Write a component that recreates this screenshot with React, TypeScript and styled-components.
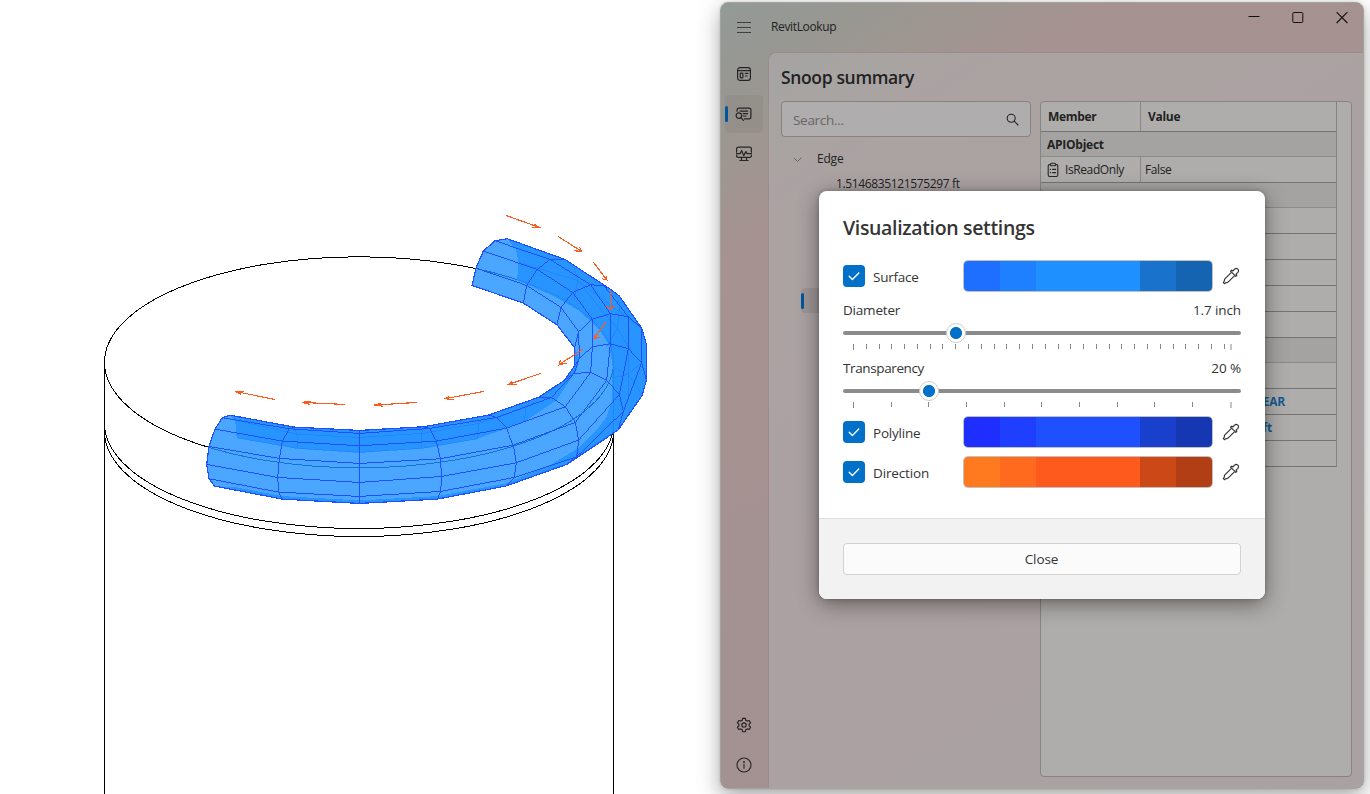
import React from "react";
import styled, { createGlobalStyle } from "styled-components";

const Global = createGlobalStyle`
  * { box-sizing: border-box; }
  body { margin: 0; background: #fff; overflow: hidden; }
  #root { font-family: "Open Sans", "Noto Sans", sans-serif; }
`;

const Desktop = styled.main`
  position: relative;
  width: 1370px;
  height: 794px;
  overflow: hidden;
  background: #fff;
`;

const SceneSvg = styled.svg`
  display: block;
`;

const Text = styled.span<{ $size?: number; $weight?: number; $color?: string; $ls?: number }>`
  font-size: ${(p) => p.$size ?? 12}px;
  font-weight: ${(p) => p.$weight ?? 400};
  color: ${(p) => p.$color ?? "#222"};
  letter-spacing: ${(p) => p.$ls ?? 0}px;
  white-space: pre;
  line-height: 1.4;
`;

/* ---------- 3D view ---------- */

type Pt = [number, number];

const rings: Pt[][] = [
  [[952, 116], [915, 122], [880, 153], [858, 204], [846, 256]],
  [[1125, 178], [1080, 178], [1042, 208], [1010, 256], [1000, 309]],
  [[1262, 268], [1242, 257], [1202, 254], [1148, 277], [1113, 322], [1101, 374]],
  [[1355, 384], [1315, 350], [1261, 341], [1207, 357], [1166, 395], [1154, 443]],
  [[1369, 540], [1355, 487], [1315, 446], [1261, 431], [1207, 440], [1168, 475], [1154, 497]],
  [[1284, 690], [1300, 634], [1288, 583], [1250, 541], [1202, 517], [1152, 520], [1123, 541]],
  [[1130, 793], [1160, 770], [1166, 720], [1156, 667], [1126, 620], [1084, 592], [1045, 592]],
  [[947, 858], [973, 832], [979, 788], [970, 735], [950, 684], [920, 652], [895, 645]],
  [[742, 897], [752, 874], [755, 829], [751, 776], [739, 723], [719, 685], [700, 680]],
  [[508, 910], [508, 889], [508, 847], [508, 790], [508, 737], [508, 700], [508, 691]],
  [[277, 897], [266, 876], [263, 832], [268, 775], [277, 723], [298, 686], [313, 681]],
  [[74, 858], [57, 836], [50, 793], [57, 739], [75, 687], [97, 653], [119, 645]],
];

const longitudinals: Pt[][] = [
  [[915, 122], [1080, 178], [1202, 254], [1261, 341], [1261, 431]],
  [[880, 153], [1042, 208], [1148, 277], [1207, 357], [1207, 440]],
  [[858, 204], [1010, 256], [1113, 322], [1166, 395], [1168, 475]],
  [[1242, 257], [1315, 350], [1315, 446]],
  [[1355, 384], [1355, 487]],
  ...[1, 2, 3, 4, 5].map((k) => rings.slice(4).map((r) => r[k])),
];

const outline: Pt[] = [
  [952, 116], [1125, 178], [1262, 268], [1288, 288], [1355, 384], [1369, 432], [1369, 540],
  [1357, 585], [1284, 690], [1130, 793], [947, 858], [742, 897], [508, 910], [277, 897], [74, 858],
  [57, 836], [50, 793], [57, 739], [75, 687], [97, 653], [119, 645], [313, 681], [508, 691],
  [700, 680], [895, 645], [1045, 592], [1123, 541], [1154, 497], [1154, 443], [1101, 374],
  [1000, 309], [846, 256], [858, 204], [880, 153], [915, 122],
];

const backFaces: Pt[][] = [
  [
    [952, 116], [1125, 178], [1262, 268], [1288, 288], [1355, 384], [1369, 432], [1369, 540],
    [1357, 585], [1284, 690], [1130, 793], [947, 858], [742, 897], [508, 910], [277, 897], [74, 858],
    [140, 862], [277, 888], [508, 901], [742, 888], [947, 850], [1080, 795], [1168, 742],
    [1220, 690], [1250, 650], [1266, 600], [1268, 500], [1258, 435], [1228, 390], [1172, 335],
    [1095, 290], [981, 240], [986, 187], [978, 150],
  ],
  [
    [119, 645], [313, 681], [508, 691], [700, 680], [895, 645], [1045, 592], [1123, 541],
    [1154, 497], [1154, 443], [1168, 475], [1160, 510], [1100, 600], [1000, 667], [862, 716], [694, 745],
    [508, 757], [323, 745], [140, 713], [136, 665],
  ],
];

const hiddenEdges: Pt[][] = [
  [[136, 660], [320, 702], [508, 712], [697, 700], [866, 670], [1008, 622], [1100, 560]],
  [[313, 681], [321, 705], [323, 745]],
  [[700, 680], [694, 705], [694, 745]],
  [[895, 645], [866, 670], [862, 716]],
  [[1020, 600], [1008, 622], [1003, 665]],
  [[140, 713], [323, 745], [508, 757], [694, 745], [862, 716]],
  [[986, 187], [1160, 240], [1282, 330], [1355, 384]],
  [[1125, 178], [1154, 205], [1163, 240], [1152, 300]],
  [[1262, 268], [1290, 310], [1282, 385], [1250, 440]],
  [[1163, 240], [1228, 322], [1282, 385], [1320, 450]],
  [[1355, 487], [1315, 523], [1262, 534]],
  [[1315, 446], [1315, 523], [1315, 600]],
  [[1268, 500], [1315, 523], [1357, 585]],
];

const arrows: Pt[][] = [
  [[948, 46], [1048, 82], [1025, 82], [1033, 73]],
  [[1104, 109], [1175, 154], [1153, 152], [1169, 142]],
  [[1210, 186], [1250, 239], [1236, 236], [1250, 227]],
  [[1261, 272], [1261, 328], [1249, 318], [1274, 318]],
  [[1249, 364], [1212, 416], [1214, 401], [1230, 411]],
  [[1178, 448], [1108, 493], [1111, 481], [1132, 490]],
  [[1052, 520], [955, 553], [966, 544], [980, 553]],
  [[881, 574], [764, 596], [778, 590], [792, 598]],
  [[680, 607], [553, 615], [574, 609], [578, 618]],
  [[464, 613], [337, 607], [362, 603], [360, 613]],
  [[254, 598], [136, 574], [162, 575], [154, 583]],
];

const pts = (p: Pt[]) => p.map((q) => q.join(",")).join(" ");

function Scene() {
  return (
    <SceneSvg width="1370" height="794" viewBox="0 0 1370 794" fill="none" shapeRendering="crispEdges">
      <g stroke="#000" strokeWidth="1">
        <ellipse cx="359" cy="362.3" rx="254.5" ry="105.5" />
        <path d="M104.5 362V794M613.5 362V794" />
        <path d="M104.5 423.5A254.5 105 0 0 0 613.5 423.5" />
        <path d="M104.5 431.5A254.5 105 0 0 0 613.5 431.5" />
      </g>
      <g transform="translate(190 200.1) scale(0.33333)" strokeWidth="3">
        {backFaces.map((f, i) => (
          <polygon key={i} points={pts(f)} fill="#1e90ff" fillOpacity="0.8" />
        ))}
        <polygon points={pts(outline)} fill="#1e90ff" fillOpacity="0.8" />
        <g stroke="#1e80fa" strokeOpacity="0.6">
          {hiddenEdges.map((l, i) => (
            <polyline key={i} points={pts(l)} />
          ))}
        </g>
        <g stroke="#1e50ff">
          {rings.map((l, i) => (
            <polyline key={i} points={pts(l)} />
          ))}
          {longitudinals.map((l, i) => (
            <polyline key={i} points={pts(l)} />
          ))}
          <polygon points={pts(outline)} strokeWidth="3.6" />
        </g>
        <g stroke="#ff5a1e" strokeWidth="3.4">
          {arrows.map(([a, b, c, d], i) => (
            <polyline key={i} points={pts([a, b, c, b, d])} />
          ))}
        </g>
      </g>
    </SceneSvg>
  );
}

/* ---------- Application window ---------- */

const AppWindow = styled.section`
  position: absolute;
  left: 720px;
  top: 2px;
  width: 644px;
  height: 787px;
  display: flex;
  flex-direction: column;
  border: 1px solid #a3a3a2;
  border-radius: 8px;
  background: linear-gradient(147deg, #939a96 0%, #989792 8%, #9f9690 14%, #a59291 21%, #a49191 60%, #a39290 100%);
  box-shadow: 0 8px 22px rgba(0, 0, 0, 0.34), 0 0 3px rgba(0, 0, 0, 0.16);
`;

const TitleBar = styled.header`
  height: 49px;
  flex: none;
  display: flex;
  align-items: flex-start;
  padding-left: 15px;
`;

const TitleText = styled.div`
  flex: 1;
  display: flex;
  padding: 16px 0 0 19px;
`;

const MenuIcon = styled.svg`
  margin-top: 16px;
`;

const Captions = styled.div`
  display: flex;
  gap: 32px;
  padding: 8px 15px 0 0;
`;

const Shell = styled.div`
  flex: 1;
  display: flex;
  min-height: 0;
`;

const Nav = styled.nav`
  width: 47px;
  display: flex;
  flex-direction: column;
  padding: 3px 0 4px 4px;
  gap: 2px;
`;

const NavItem = styled.div<{ $active?: boolean }>`
  width: 38px;
  height: 38px;
  border-radius: 4px;
  display: flex;
  align-items: center;
  background: ${(p) => (p.$active ? "rgba(120,112,108,0.17)" : "transparent")};
  svg { margin-left: ${(p) => (p.$active ? 7 : 11)}px; }
`;

const ActiveMark = styled.i<{ $h: number }>`
  width: 3px;
  height: ${(p) => p.$h}px;
  border-radius: 2px;
  background: #00569c;
  flex: none;
`;

const Spacer = styled.div`
  flex: 1;
`;

const Content = styled.div`
  flex: 1;
  display: flex;
  flex-direction: column;
  border: solid #9c8b8a;
  border-width: 1px 0 0 1px;
  border-radius: 8px 0 7px 0;
  background: rgba(178, 178, 180, 0.5);
  padding: 12px 11px 11px 12px;
`;

const PageTitle = styled.div`
  height: 36px;
`;

const Columns = styled.div`
  flex: 1;
  display: flex;
  gap: 9px;
  min-height: 0;
`;

const TreePane = styled.div`
  width: 250px;
`;

const SearchBox = styled.div`
  height: 36px;
  border: 1px solid #878383;
  border-radius: 4px;
  background: #afadad;
  display: flex;
  align-items: center;
  justify-content: space-between;
  padding: 0 11px;
  ${Text} { padding-top: 2px; }
`;

const TreeRow = styled.div<{ $indent: number }>`
  height: 25px;
  display: flex;
  align-items: center;
  gap: 15px;
  padding-left: ${(p) => p.$indent}px;
`;

const Tree = styled.div`
  padding-top: 10px;
`;

const SelectedRow = styled.div`
  margin: 91px 0 0 20px;
  height: 25px;
  display: flex;
  align-items: center;
  border-radius: 4px;
  background: rgba(120, 110, 110, 0.25);
`;

const Table = styled.div`
  flex: 1;
  border: 1px solid #888483;
  border-radius: 4px;
  background: #afadab;
  overflow: hidden;
`;

const Grid = styled.div`
  width: 296px;
  border-right: 1px solid #848282;
  ${Text} { padding-top: 2px; }
`;

const Row = styled.div<{ $h: number; $group?: boolean; $light?: boolean }>`
  height: ${(p) => p.$h}px;
  display: flex;
  border-bottom: 1px solid ${(p) => (p.$light ? "#8d8b8a" : "#757373")};
  background: ${(p) => (p.$group ? "#a5a3a2" : "transparent")};
`;

const Cell = styled.div<{ $w?: number; $pad: number }>`
  ${(p) => (p.$w ? `width: ${p.$w}px; border-right: 1px solid #8b8988;` : "flex: 1;")}
  padding-left: ${(p) => p.$pad}px;
  display: flex;
  align-items: center;
  gap: 6px;
`;

const LinkCell = styled.div<{ $right: number }>`
  flex: 1;
  display: flex;
  justify-content: flex-end;
  align-items: center;
  padding-right: ${(p) => p.$right}px;
`;

const line = { fill: "none", stroke: "#262424", strokeLinecap: "round", strokeLinejoin: "round" } as const;

const BoardIcon = () => (
  <svg width="16" height="16" viewBox="0 0 16 16" {...line} strokeWidth="1.2">
    <rect x="1.6" y="1.6" width="12.8" height="12.8" rx="2.4" />
    <path d="M1.8 4.6H14.2M9.3 7.4H12M9.3 10H11" />
    <rect x="4.2" y="7.2" width="2.7" height="4.6" rx=".5" />
  </svg>
);

const SnoopIcon = () => (
  <svg width="17" height="16" viewBox="0 0 17 16" {...line} strokeWidth="1.2">
    <path d="M2.1 5.2V4Q2.1 2.1 4 2.1H14Q15.9 2.1 15.9 4V11Q15.9 12.9 14 12.9H9.4M5.2 5.1H12.6M8.2 7.6H12.6M8.4 10H11" />
    <circle cx="3.9" cy="9.6" r="2.8" />
    <path d="M6 11.7L8.4 14.3" />
  </svg>
);

const MonitorIcon = () => (
  <svg width="16" height="16" viewBox="0.5 0 16 16" {...line} strokeWidth="1.2">
    <path d="M1.1 6.2V3Q1.1 1.1 3 1.1H14Q15.9 1.1 15.9 3V6.2M1.1 9V10Q1.1 11.4 3 11.4H14Q15.9 11.4 15.9 10V9" />
    <path d="M1 7.6H4.6L6.2 4.6L8.2 9.6L10.4 5.6L11.6 7.6H16M6 11.6V14.4M11 11.6V14.4M4.4 14.5H12.6" />
  </svg>
);

const GearIcon = () => (
  <svg width="16" height="16" viewBox="0 0 16 16" {...line} strokeWidth="1.15">
    <path d="M6.6 1.3H9.4L9.8 3.3L11.2 4.1L13.2 3.5L14.6 5.9L13.1 7.2V8.8L14.6 10.1L13.2 12.5L11.2 11.9L9.8 12.7L9.4 14.7H6.6L6.2 12.7L4.8 11.9L2.8 12.5L1.4 10.1L2.9 8.8V7.2L1.4 5.9L2.8 3.5L4.8 4.1L6.2 3.3Z" />
    <circle cx="8" cy="8" r="2.2" />
  </svg>
);

const InfoIcon = () => (
  <svg width="16" height="16" viewBox="0 0 16 16" {...line} strokeWidth="1.1">
    <circle cx="8" cy="8" r="7" />
    <path d="M8 7.4V11.2" />
    <circle cx="8" cy="5" r=".4" fill="#262424" />
  </svg>
);

/* ---------- Dialog ---------- */

const Dialog = styled.section`
  position: absolute;
  left: 819px;
  top: 191px;
  width: 446px;
  height: 408px;
  display: flex;
  flex-direction: column;
  border-radius: 8px;
  overflow: hidden;
  background: #fff;
`;

const DialogShadow = styled.div`
  position: absolute;
  left: 819px;
  top: 191px;
  width: 446px;
  height: 408px;
  border-radius: 8px;
  box-shadow: 0 5px 22px rgba(0, 0, 0, 0.42), 0 0 4px rgba(0, 0, 0, 0.25);
`;

const DialogBody = styled.div`
  flex: 1;
  padding: 24px 24px 0;
`;

const DialogTitle = styled.h1`
  margin: 0 0 19px;
  height: 26px;
  display: flex;
  align-items: center;
`;

const OptionRow = styled.div<{ $top?: number }>`
  height: 32px;
  margin-top: ${(p) => p.$top ?? 0}px;
  display: flex;
  align-items: center;
`;

const Check = styled.div`
  width: 22px;
  height: 22px;
  border-radius: 4px;
  background: #0070c9;
  display: grid;
  place-items: center;
`;

const OptionLabel = styled.div`
  width: 98px;
  display: flex;
  padding: 2px 0 0 8px;
`;

const Palette = styled.div`
  width: 250px;
  height: 32px;
  display: flex;
  border: 1px solid #c2c0bc;
  border-radius: 5px;
  overflow: hidden;
`;

const Shade = styled.div<{ $c: string; $w: number }>`
  width: ${(p) => p.$w}px;
  background: ${(p) => p.$c};
`;

const PickerIcon = styled.svg`
  margin-left: 9px;
`;

const Setting = styled.div`
  height: 58px;
  padding-top: 8px;
`;

const SettingHead = styled.div`
  height: 20px;
  display: flex;
  align-items: center;
  justify-content: space-between;
`;

const Slider = styled.div`
  height: 20px;
  margin-top: 3px;
  display: flex;
  align-items: center;
`;

const Track = styled.div<{ $w?: number }>`
  height: 4px;
  ${(p) => (p.$w ? `width: ${p.$w}px;` : "flex: 1;")}
  background: #8b8b8b;
  border-radius: 2px;
`;

const Thumb = styled.div`
  width: 20px;
  height: 20px;
  margin: 0 -2px;
  border: 1px solid #cfcfcf;
  border-radius: 50%;
  background: radial-gradient(circle, #0070c9 5.6px, #fff 6.4px);
  z-index: 1;
`;

const Ticks = styled.div`
  display: flex;
  align-items: flex-start;
  margin: 1px 9px 0 10px;
  height: 6px;
`;

const TickRun = styled.div<{ $w: number }>`
  width: ${(p) => p.$w}px;
  display: flex;
  justify-content: space-between;
`;

const Tick = styled.i<{ $long?: boolean }>`
  width: 1px;
  height: ${(p) => (p.$long ? 6 : 5)}px;
  background: #868686;
`;

const EndTick = styled.i`
  width: 2px;
  height: 6px;
  margin-left: auto;
  background: #c4c4c4;
`;

const DialogFooter = styled.footer`
  height: 81px;
  border-top: 1px solid #e0e0e0;
  background: #f2f2f2;
  padding: 24px;
`;

const CloseButton = styled.button`
  width: 100%;
  height: 32px;
  padding: 0 1px 0 0;
  border: 1px solid #d1d1d1;
  border-radius: 4px;
  background: #fbfbfb;
  font-family: inherit;
`;

const dark = "#343434";

function Option({ label, colors, top, ls }: { label: string; colors: string[]; top?: number; ls?: number }) {
  const widths = [36, 36, 104, 36, 36];
  return (
    <OptionRow $top={top}>
      <Check>
        <svg width="14" height="12" viewBox="0 0 14 12" fill="none" stroke="#fff" strokeWidth="1.4" strokeLinecap="round" strokeLinejoin="round">
          <path d="M2.2 6.2L5.4 9.4L11.8 3" />
        </svg>
      </Check>
      <OptionLabel>
        <Text $size={13.5} $color={dark} $ls={ls}>{label}</Text>
      </OptionLabel>
      <Palette>
        {colors.map((c, i) => (
          <Shade key={c} $c={c} $w={widths[i]} />
        ))}
      </Palette>
      <PickerIcon width="18" height="18" viewBox="0 0 18 18" fill="none" stroke="#333" strokeWidth="1.15" strokeLinejoin="round" strokeLinecap="round">
        <path d="M9.2 5.6L3.1 11.7Q2.5 12.3 2.4 13.1L2.2 14.3L1.3 15.6L2.4 16.7L3.7 15.8L4.9 15.6Q5.7 15.5 6.3 14.9L12.4 8.8" />
        <path d="M8.6 4.2L9.7 3.1L10.8 4L12.6 2.1Q14 .9 15.6 1.9Q17.3 3.5 15.9 5.4L14 7.2L14.9 8.3L13.8 9.4Z" />
      </PickerIcon>
    </OptionRow>
  );
}

function SliderSetting(p: { label: string; value: string; pos: number; count: number; run: number; ls?: number }) {
  return (
    <Setting>
      <SettingHead>
        <Text $size={13.5} $color={dark} $ls={p.ls}>{p.label}</Text>
        <Text $size={13.5} $color={dark} $ls={-0.1}>{p.value}</Text>
      </SettingHead>
      <Slider>
        <Track $w={p.pos} />
        <Thumb />
        <Track />
      </Slider>
      <Ticks>
        <TickRun $w={p.run}>
          {Array.from({ length: p.count }, (_, i) => (
            <Tick key={i} $long={i === 0} />
          ))}
        </TickRun>
        <EndTick />
      </Ticks>
    </Setting>
  );
}

export default function App() {
  return (
    <Desktop>
      <Global />
      <Scene />
      <AppWindow>
        <TitleBar>
          <MenuIcon width="16" height="16" viewBox="0 0 16 16" stroke="#3f3e3c" strokeWidth="1">
            <path d="M1 3.5H15M1 8.5H15M1 13.5H15" />
          </MenuIcon>
          <TitleText>
            <Text $ls={-0.35}>RevitLookup</Text>
          </TitleText>
          <Captions>
            <svg width="12" height="14" viewBox="0 0 12 14" stroke="#111" fill="none">
              <path d="M.5 5.5H11.5" />
            </svg>
            <svg width="12" height="14" viewBox="0 0 12 14" stroke="#111" fill="none">
              <rect x=".8" y="1.5" width="10" height="10" rx="1" />
            </svg>
            <svg width="12" height="14" viewBox="0 0 12 14" stroke="#111" fill="none" strokeWidth="1.1">
              <path d="M.6 1.2L11.4 12M11.4 1.2L.6 12" />
            </svg>
          </Captions>
        </TitleBar>
        <Shell>
          <Nav>
            <NavItem><BoardIcon /></NavItem>
            <NavItem $active><ActiveMark $h={16} /><SnoopIcon /></NavItem>
            <NavItem><MonitorIcon /></NavItem>
            <Spacer />
            <NavItem><GearIcon /></NavItem>
            <NavItem><InfoIcon /></NavItem>
          </Nav>
          <Content>
            <PageTitle>
              <Text $size={17.5} $weight={600} $ls={-0.35}>Snoop summary</Text>
            </PageTitle>
            <Columns>
              <TreePane>
                <SearchBox>
                  <Text $size={13.5} $color="#686666" $ls={-0.3}>Search...</Text>
                  <svg width="13" height="13" viewBox="0 0 13 13" {...line} strokeWidth="1.1">
                    <circle cx="5.2" cy="5.2" r="4" />
                    <path d="M8.2 8.2L12 12" />
                  </svg>
                </SearchBox>
                <Tree>
                  <TreeRow $indent={12}>
                    <svg width="9" height="6" viewBox="0 0 9 6" fill="none" stroke="#6b6767" strokeLinecap="round">
                      <path d="M1 1L4.5 4.5L8 1" />
                    </svg>
                    <Text $ls={-0.2}>Edge</Text>
                  </TreeRow>
                  <TreeRow $indent={55}>
                    <Text $ls={-0.36}>1.5146835121575297 ft</Text>
                  </TreeRow>
                </Tree>
                <SelectedRow><ActiveMark $h={16} /></SelectedRow>
              </TreePane>
              <Table>
                <Grid>
                  <Row $h={30}>
                    <Cell $w={100} $pad={7}><Text $weight={700} $ls={-0.3}>Member</Text></Cell>
                    <Cell $pad={7}><Text $weight={700} $ls={-0.3}>Value</Text></Cell>
                  </Row>
                  <Row $h={25} $group $light>
                    <Cell $pad={6}><Text $weight={700} $ls={-0.25}>APIObject</Text></Cell>
                  </Row>
                  <Row $h={26}>
                    <Cell $w={100} $pad={6}>
                      <svg width="12" height="16" viewBox="0 0 12 16" {...line} strokeWidth="1.1">
                        <path d="M3.5 2.6H2.6Q1.2 2.6 1.2 4V13Q1.2 14.5 2.6 14.5H9.4Q10.8 14.5 10.8 13V4Q10.8 2.6 9.4 2.6H8.5" />
                        <rect x="3.5" y="1.3" width="5" height="2.5" rx="1" />
                        <path d="M3.3 7.4H3.6M5.6 7.4H8.6M3.3 10.6H3.6M5.6 10.6H8.6" />
                      </svg>
                      <Text $ls={-0.4}>IsReadOnly</Text>
                    </Cell>
                    <Cell $pad={4}><Text $ls={-0.4}>False</Text></Cell>
                  </Row>
                  <Row $h={25} $group $light />
                  <Row $h={26} />
                  <Row $h={26} />
                  <Row $h={26} />
                  <Row $h={26} />
                  <Row $h={26} />
                  <Row $h={25} $group $light />
                  <Row $h={26} />
                  <Row $h={26}>
                    <LinkCell $right={51}><Text $weight={700} $color="#145a92" $ls={-0.2}>EAR</Text></LinkCell>
                  </Row>
                  <Row $h={26}>
                    <LinkCell $right={64}><Text $weight={700} $color="#145a92" $ls={-0.2}>ft</Text></LinkCell>
                  </Row>
                  <Row $h={26} />
                </Grid>
              </Table>
            </Columns>
          </Content>
        </Shell>
      </AppWindow>
      <DialogShadow />
      <Dialog>
        <DialogBody>
          <DialogTitle>
            <Text $size={19.5} $weight={600} $color={dark} $ls={-0.34}>Visualization settings</Text>
          </DialogTitle>
          <Option label="Surface" colors={["#1e6eff", "#1e7fff", "#1e90ff", "#1973cc", "#1564b1"]} ls={-0.25} />
          <SliderSetting label="Diameter" value="1.7 inch" pos={105} count={30} run={372} ls={-0.2} />
          <SliderSetting label="Transparency" value="20 %" pos={78} count={10} run={340} ls={-0.38} />
          <Option top={8} label="Polyline" colors={["#1e2eff", "#1e3fff", "#1e50ff", "#1940cc", "#1537b1"]} ls={-0.2} />
          <Option top={8} label="Direction" colors={["#ff7a1e", "#ff6a1e", "#ff5a1e", "#cc4817", "#b13e15"]} ls={-0.15} />
        </DialogBody>
        <DialogFooter>
          <CloseButton>
            <Text $size={13.5} $color={dark} $ls={-0.1}>Close</Text>
          </CloseButton>
        </DialogFooter>
      </Dialog>
    </Desktop>
  );
}
